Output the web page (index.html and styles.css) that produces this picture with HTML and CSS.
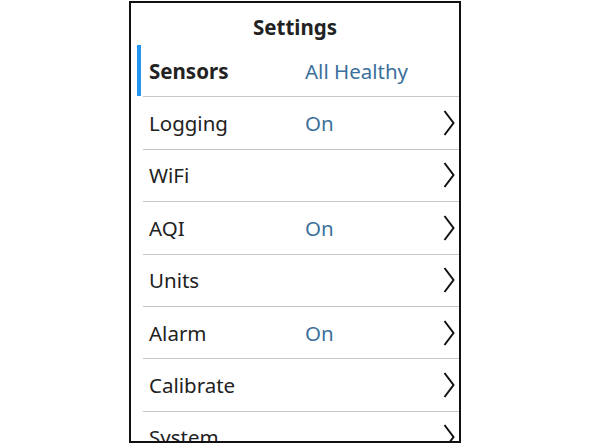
FILE: index.html
```html
<!DOCTYPE html>
<html>
<head>
<meta charset="utf-8">
<link rel="stylesheet" href="styles.css">
</head>
<body>
<div class="screen">
  <div class="title">Settings</div>
  <div class="list">
    <div class="row active">
      <div class="mark"></div>
      <div class="content"><span class="label">Sensors</span><span class="value">All Healthy</span></div>
    </div>
    <div class="row">
      <div class="mark"></div>
      <div class="content"><span class="label">Logging</span><span class="value">On</span>
        <svg class="chev" width="12" height="26" viewBox="0 0 12 26"><polyline points="1.5,1 10.5,13 1.5,25" fill="none" stroke="#111" stroke-width="2"/></svg></div>
    </div>
    <div class="row">
      <div class="mark"></div>
      <div class="content"><span class="label">WiFi</span><span class="value"></span>
        <svg class="chev" width="12" height="26" viewBox="0 0 12 26"><polyline points="1.5,1 10.5,13 1.5,25" fill="none" stroke="#111" stroke-width="2"/></svg></div>
    </div>
    <div class="row">
      <div class="mark"></div>
      <div class="content"><span class="label">AQI</span><span class="value">On</span>
        <svg class="chev" width="12" height="26" viewBox="0 0 12 26"><polyline points="1.5,1 10.5,13 1.5,25" fill="none" stroke="#111" stroke-width="2"/></svg></div>
    </div>
    <div class="row">
      <div class="mark"></div>
      <div class="content"><span class="label">Units</span><span class="value"></span>
        <svg class="chev" width="12" height="26" viewBox="0 0 12 26"><polyline points="1.5,1 10.5,13 1.5,25" fill="none" stroke="#111" stroke-width="2"/></svg></div>
    </div>
    <div class="row">
      <div class="mark"></div>
      <div class="content"><span class="label">Alarm</span><span class="value">On</span>
        <svg class="chev" width="12" height="26" viewBox="0 0 12 26"><polyline points="1.5,1 10.5,13 1.5,25" fill="none" stroke="#111" stroke-width="2"/></svg></div>
    </div>
    <div class="row">
      <div class="mark"></div>
      <div class="content"><span class="label">Calibrate</span><span class="value"></span>
        <svg class="chev" width="12" height="26" viewBox="0 0 12 26"><polyline points="1.5,1 10.5,13 1.5,25" fill="none" stroke="#111" stroke-width="2"/></svg></div>
    </div>
    <div class="row">
      <div class="mark"></div>
      <div class="content"><span class="label">System</span><span class="value"></span>
        <svg class="chev" width="12" height="26" viewBox="0 0 12 26"><polyline points="1.5,1 10.5,13 1.5,25" fill="none" stroke="#111" stroke-width="2"/></svg></div>
    </div>
  </div>
</div>
</body>
</html>
```
FILE: styles.css
```css
html, body {
  margin: 0;
  padding: 0;
  background: #fff;
}
body {
  font-family: "Noto Sans", "Open Sans", sans-serif;
  color: #222;
}
.screen {
  box-sizing: border-box;
  margin: 1px 0 0 129px;
  width: 332px;
  height: 442px;
  border: 2px solid #111;
  overflow: hidden;
}
.title {
  box-sizing: border-box;
  height: 42px;
  padding-top: 5px;
  display: flex;
  align-items: center;
  justify-content: center;
  font-size: 20.5px;
  font-weight: bold;
}
.row {
  display: flex;
  height: 52.4px;
}
.mark {
  width: 4px;
  margin: 0 2px 0 6px;
}
.row.active .mark {
  background: #2196f3;
  margin-bottom: 1px;
}
.content {
  flex: 1;
  display: flex;
  align-items: center;
  border-bottom: 1px solid #c8c8c8;
  padding-left: 6px;
  padding-right: 4px;
  font-size: 20.5px;
}
.label {
  width: 156px;
}
.row.active .label {
  font-weight: bold;
}
.value {
  flex: 1;
  color: #3b6f9c;
}
.chev {
  display: block;
}
```
